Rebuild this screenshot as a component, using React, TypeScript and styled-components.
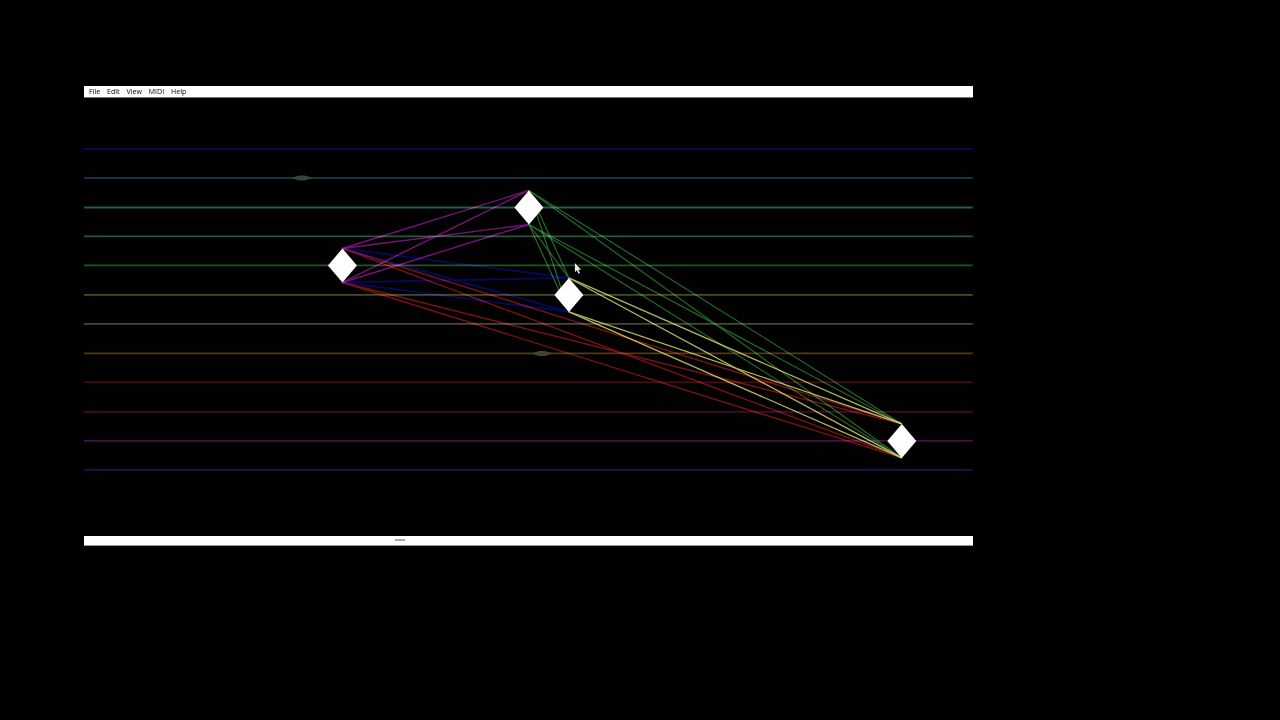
import React from "react";
import styled, { createGlobalStyle } from "styled-components";

const GlobalStyle = createGlobalStyle`
  * { box-sizing: border-box; }
  body { margin: 0; background: #000; }
`;

const Page = styled.main`
  min-height: 100vh;
  padding: 86px 24% 0 84px;
  background: #000;
`;

const AppWindow = styled.section`
  display: flex;
  flex-direction: column;
`;

const MenuBar = styled.nav`
  display: flex;
  align-items: center;
  gap: 7px;
  height: 12px;
  padding: 0 5px;
  background: #fff;
  border-bottom: 1px solid #777;
`;

const MenuButton = styled.button`
  padding: 0;
  border: 0;
  background: none;
  color: #000;
  font: 7px/10px "Open Sans", "Noto Sans", sans-serif;
`;

const Stage = styled.svg`
  display: block;
  width: 100%;
  height: auto;
  background: #000100;
`;

const StatusBar = styled.footer`
  display: flex;
  align-items: center;
  height: 10px;
  padding-left: 35%;
  background: #fff;
  border-bottom: 1px solid #999;
`;

const Grip = styled.span`
  width: 10px;
  height: 2px;
  background: #aaa;
`;

const LinkGroup = styled.g`
  mix-blend-mode: screen;
`;

const menus = ["File", "Edit", "View", "MIDI", "Help"];

const staff: [number, string][] = [
  [51, "#0b0846"],
  [80, "#173242"],
  [109.5, "#245a48"],
  [138.5, "#245a36"],
  [167.5, "#245424"],
  [197, "#484e24"],
  [226, "#464a36"],
  [255.5, "#503a1a"],
  [284.5, "#4c0c12"],
  [314, "#3c0e2a"],
  [343, "#420f46"],
  [372, "#1c1050"],
];

type Point = { x: number; y: number };

const HALF_W = 14.5;
const HALF_H = 17;

const notes: Record<string, Point> = {
  left: { x: 258.5, y: 167.5 },
  top: { x: 445, y: 109.5 },
  mid: { x: 485, y: 197 },
  right: { x: 818, y: 343 },
};

type Link = { from: Point; to: Point; color: string; width: number };

const links: Link[] = [
  { from: notes.left, to: notes.mid, color: "#07075c", width: 1.8 },
  { from: notes.left, to: notes.right, color: "#7a1012", width: 1.4 },
  { from: notes.left, to: notes.top, color: "#7a107e", width: 1.4 },
  { from: notes.top, to: notes.mid, color: "#2c6e30", width: 1.1 },
  { from: notes.top, to: notes.right, color: "#226a28", width: 1.2 },
  { from: notes.mid, to: notes.right, color: "#b4b45c", width: 1.3 },
];

const ends = [-HALF_H, HALF_H];

function LinkLines({ from, to, color, width }: Link) {
  return (
    <LinkGroup stroke={color} strokeWidth={width}>
      {ends.map((a) =>
        ends.map((b) => (
          <line key={`${a}:${b}`} x1={from.x} y1={from.y + a} x2={to.x} y2={to.y + b} />
        ))
      )}
    </LinkGroup>
  );
}

function Diamond({ x, y }: Point) {
  return (
    <path
      fill="#fff"
      d={`M${x} ${y - HALF_H}L${x + HALF_W} ${y}L${x} ${y + HALF_H}L${x - HALF_W} ${y}Z`}
    />
  );
}

function Ripple({ x, y, color }: Point & { color: string }) {
  return (
    <path fill={color} d={`M${x - 11} ${y}L${x - 3} ${y - 2.5}H${x + 3}L${x + 11} ${y}L${x + 3} ${y + 2.5}H${x - 3}Z`} />
  );
}

export default function App() {
  return (
    <>
      <GlobalStyle />
      <Page>
        <AppWindow>
          <MenuBar>
            {menus.map((name) => (
              <MenuButton key={name} type="button">{name}</MenuButton>
            ))}
          </MenuBar>
          <Stage viewBox="0 0 889 438" role="img" aria-label="Note constellation">
            {staff.map(([y, color]) => (
              <line key={y} x1="0" x2="889" y1={y} y2={y} stroke={color} strokeWidth="1.8" />
            ))}
            <Ripple x={218} y={80} color="#344644" />
            <Ripple x={458} y={255.5} color="#484234" />
            {links.map((link, i) => (
              <LinkLines key={i} {...link} />
            ))}
            {Object.entries(notes).map(([name, p]) => (
              <Diamond key={name} {...p} />
            ))}
            <path
              fill="#eee"
              d="M491 165V174.2L493 172.4L494.6 175.8L496 175.1L494.5 171.8H497.2Z"
            />
          </Stage>
          <StatusBar>
            <Grip />
          </StatusBar>
        </AppWindow>
      </Page>
    </>
  );
}
